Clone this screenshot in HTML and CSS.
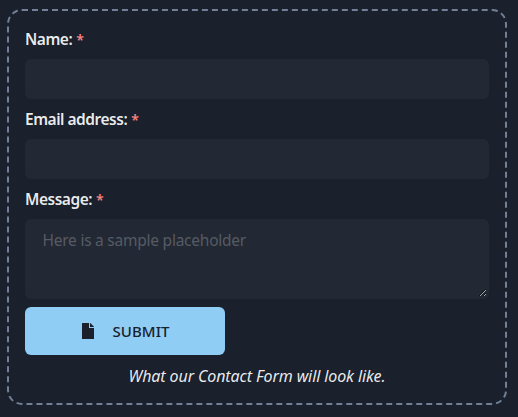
FILE: index.html
```html
<!DOCTYPE html>
<html lang="en">
<head>
<meta charset="utf-8">
<title>Contact Form</title>
<link rel="stylesheet" href="styles.css">
</head>
<body>
<form class="contact-form">
  <label class="label" for="name"><span>Name:</span><span class="required">*</span></label>
  <input class="field" id="name" type="text">
  <label class="label" for="email"><span>Email address:</span><span class="required">*</span></label>
  <input class="field" id="email" type="email">
  <label class="label" for="message"><span>Message:</span><span class="required">*</span></label>
  <textarea class="field message" id="message" placeholder="Here is a sample placeholder"></textarea>
  <button class="submit" type="button">
    <svg class="icon" width="12" height="16" viewBox="0 0 12 16" fill="currentColor" aria-hidden="true"><path d="M.5 0H7v5h5v10.5a.5.5 0 0 1-.5.5H.5a.5.5 0 0 1-.5-.5V.5A.5.5 0 0 1 .5 0ZM8 0h.3L12 3.7V4H8Z"/></svg>
    <span>SUBMIT</span>
  </button>
  <p class="caption"><em>What our Contact Form will look like.</em></p>
</form>
</body>
</html>
```
FILE: styles.css
```css
* { box-sizing: border-box; }
body {
  margin: 0;
  padding: 9px 0 0 7px;
  min-height: 417px;
  background: #1a202c;
  color: rgba(255, 255, 255, 0.92);
  font: 15px/24px "Noto Sans", "Open Sans", sans-serif;
}
.contact-form {
  display: flex;
  flex-direction: column;
  width: 500px;
  height: 396px;
  padding: 16px;
  border: 2px dashed #718096;
  border-radius: 15px;
}
.label {
  display: flex;
  flex: none;
  gap: 4px;
  height: 24px;
  margin-bottom: 8px;
  font-size: 15.5px;
  font-weight: 600;
  letter-spacing: -0.48px;
  line-height: 25px;
}
.required { color: #fc8181; font-size: 14px; }
.field {
  flex: none;
  width: 100%;
  height: 40px;
  margin: 0 0 8px;
  padding: 0 16px;
  border: 2px solid transparent;
  border-radius: 6px;
  outline: 0;
  background: rgba(255, 255, 255, 0.04);
  color: inherit;
  font: inherit;
}
.message {
  height: 80px;
  padding: 8px 15.5px;
  font-size: 15.5px;
  letter-spacing: -0.24px;
  line-height: 22px;
  resize: vertical;
}
.message::placeholder { color: #575b63; }
.submit {
  display: flex;
  flex: none;
  align-items: center;
  justify-content: center;
  gap: 18px;
  width: 200px;
  height: 48px;
  padding: 0 0 0 2px;
  border: 0;
  border-radius: 6px;
  background: #90cdf4;
  color: #1a202c;
  font: 500 15px/24px "Noto Sans", "Open Sans", sans-serif;
  letter-spacing: 0.1px;
}
.caption {
  margin: 9px 0 0;
  font-size: 16px;
  text-align: center;
  letter-spacing: -0.1px;
}
```
